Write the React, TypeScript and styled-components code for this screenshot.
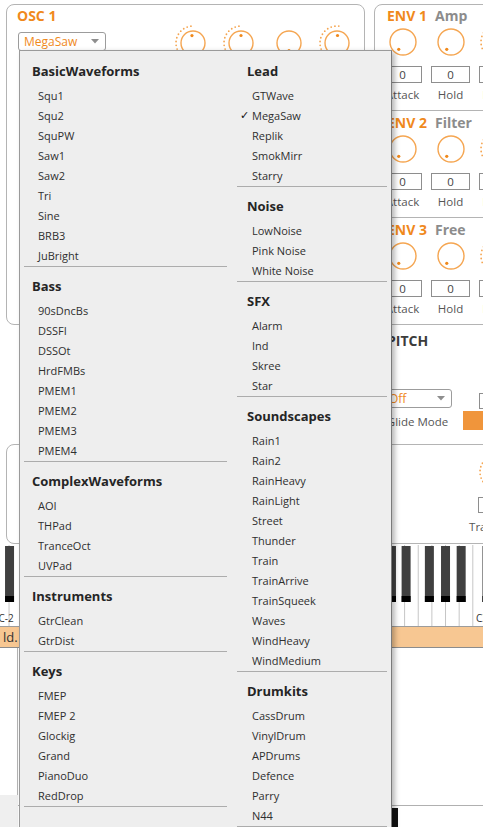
import React from "react";
import styled, { createGlobalStyle } from "styled-components";

const ORANGE = "#f0891c";
const KNOB = "#f5a652";

const GlobalStyle = createGlobalStyle`
  html, body { margin: 0; padding: 0; background: #fff; }
  body { font-family: "Open Sans", "Noto Sans", sans-serif; overflow: hidden; }
  * { box-sizing: border-box; }
`;

const Page = styled.div`
  position: relative;
  width: 483px;
  height: 827px;
  overflow: hidden;
  display: flex;
  flex-direction: column;
  background: #fff;
  color: #333;
`;

const TopArea = styled.div`
  flex: none;
  display: grid;
  grid-template-columns: 359px 170px;
  grid-template-rows: 321px 119px;
  column-gap: 9px;
  padding: 4px 0 0 6px;
`;

const OscPanel = styled.div`
  border: 1px solid #b4b4b4;
  border-radius: 8px;
  padding: 1px 3px 0 10px;
  display: flex;
  flex-direction: column;
`;

const PanelTitle = styled.div`
  height: 20px;
  line-height: 20px;
  font-size: 14px;
  font-weight: 700;
  color: ${ORANGE};
  white-space: nowrap;
`;

const OscRow = styled.div`
  display: flex;
  align-items: flex-start;
`;

const Select = styled.div<{ $w: number }>`
  width: ${(p) => p.$w}px;
  height: 19px;
  border: 1px solid #9c9c9c;
  border-radius: 3px;
  background: #fff;
  display: flex;
  align-items: center;
  justify-content: space-between;
  padding: 0 6px 0 5px;
  font-size: 12px;
  color: ${ORANGE};
  flex: none;
`;

const OscSelect = styled(Select)`
  margin: 6px 0 0 1px;
`;

const KnobGroup = styled.div`
  margin: -3px 0 0 auto;
  display: flex;
`;

const KnobCell = styled.div<{ $w: number }>`
  width: ${(p) => p.$w}px;
  display: flex;
  justify-content: center;
`;

const EnvPanel = styled.div`
  border: 1px solid #b4b4b4;
  border-radius: 8px;
  display: flex;
  flex-direction: column;
  overflow: hidden;
`;

const EnvSection = styled.div<{ $first?: boolean; $last?: boolean }>`
  padding: ${(p) => (p.$first ? 1 : 2)}px 0 7px 8px;
  border-bottom: ${(p) => (p.$last ? "none" : "1px solid #b4b4b4")};
`;

const SectionHead = styled.div`
  height: 20px;
  line-height: 20px;
  margin-left: 4px;
  display: flex;
  gap: 8px;
  font-size: 14px;
  font-weight: 700;
  white-space: nowrap;
`;

const HeadMain = styled.span<{ $color: string }>`
  color: ${(p) => p.$color};
`;

const HeadSub = styled.span`
  color: #8c8c8c;
`;

const CellRow = styled.div`
  display: flex;
  gap: 9px;
`;

const EnvCell = styled.div`
  width: 39px;
  flex: none;
  display: flex;
  flex-direction: column;
  align-items: center;
`;

const KnobWrap = styled.div<{ $mt: number }>`
  margin-top: ${(p) => p.$mt}px;
  height: 40px;
  display: flex;
  justify-content: center;
`;

const NumBox = styled.div<{ $mt: number; $h: number }>`
  margin-top: ${(p) => p.$mt}px;
  width: 39px;
  height: ${(p) => p.$h}px;
  border: 1px solid #8e8e8e;
  background: #fff;
  font-size: 11.5px;
  line-height: ${(p) => p.$h - 2}px;
  text-align: center;
  color: #444;
  flex: none;
`;

const CtlLabel = styled.div<{ $mt: number }>`
  margin-top: ${(p) => p.$mt}px;
  height: 16px;
  line-height: 16px;
  font-size: 11.5px;
  color: #555;
  white-space: nowrap;
`;

const PitchArea = styled.div`
  grid-column: 2;
  padding: 6px 0 0 9px;
`;

const PitchHead = styled.div`
  height: 20px;
  line-height: 20px;
  margin-left: 4px;
  font-size: 14px;
  font-weight: 700;
  color: #3c3c3c;
`;

const PitchRow = styled.div`
  margin-top: 38px;
  display: flex;
  gap: 11px;
`;

const WideCell = styled.div<{ $w: number }>`
  width: ${(p) => p.$w}px;
  flex: none;
  display: flex;
  flex-direction: column;
  align-items: center;
`;

const GlideButton = styled.div`
  margin-top: 2px;
  width: 70px;
  height: 19px;
  background: #f0953b;
  color: #fbe3c8;
  font-size: 11.5px;
  line-height: 19px;
  text-align: center;
`;

const LowerPanel = styled.div`
  flex: none;
  margin-left: 6px;
  width: 540px;
  height: 100px;
  border: 1px solid #b4b4b4;
  border-radius: 8px;
  display: flex;
  justify-content: flex-end;
  padding: 7px 13px 0 0;
`;

const KeyboardBox = styled.div`
  flex: none;
  margin-top: 1px;
  height: 81px;
  background: #fff;
`;

const StatusBar = styled.div`
  flex: none;
  height: 22px;
  border-top: 1px solid #9c9c9c;
  border-bottom: 1px solid #8c8c8c;
  background: #f7c792;
  font-size: 13px;
  line-height: 20px;
  padding-left: 3px;
  color: #333;
`;

const Footer = styled.div`
  flex: 1;
  display: flex;
`;

const LeftRail = styled.div`
  width: 18px;
  flex: none;
  display: flex;
  flex-direction: column;
`;

const RailTop = styled.div`
  height: 147px;
  border-right: 1px solid #b5b5b5;
  background: #fff;
`;

const RailBottom = styled.div`
  flex: 1;
  background: #efefef;
`;

const FooterMain = styled.div`
  flex: 1;
  display: flex;
  flex-direction: column;
  justify-content: flex-end;
`;

const BottomStrip = styled.div`
  height: 22px;
  border-top: 1px solid #b0b0b0;
  padding: 2px 0 0 374px;
  display: flex;
`;

const DarkBlock = styled.div`
  width: 6px;
  background: #111;
`;

/* ---------- Menu ---------- */

const Menu = styled.div`
  position: absolute;
  left: 19px;
  top: 50px;
  width: 373px;
  height: 800px;
  background: #eeeeee;
  border: 1px solid #9a9a9a;
  border-right-color: #7a7a7a;
  box-shadow: 3px 2px 5px rgba(0, 0, 0, 0.28);
  padding: 1px 0 0 4px;
  display: grid;
  grid-template-columns: 203px 150px;
  column-gap: 10px;
  align-items: start;
  z-index: 10;
`;

const Column = styled.div`
  display: flex;
  flex-direction: column;
`;

const Group = styled.div`
  padding-top: 9px;
  border-bottom: 1px solid #acacac;
`;

const GroupTitle = styled.div<{ $indent: number }>`
  height: 20px;
  line-height: 20px;
  margin-bottom: 5px;
  padding-left: ${(p) => p.$indent}px;
  font-size: 13px;
  font-weight: 700;
  color: #252525;
  white-space: nowrap;
`;

const Item = styled.div<{ $indent: number }>`
  position: relative;
  height: 20px;
  line-height: 20px;
  padding-left: ${(p) => p.$indent}px;
  font-size: 11px;
  color: #2f2f2f;
  white-space: nowrap;
`;

const Check = styled.span`
  position: absolute;
  left: 3px;
  top: 0;
  font-family: "DejaVu Sans", sans-serif;
  font-size: 11px;
  font-weight: 700;
  color: #111;
`;

/* ---------- drawings ---------- */

const Arrow = () => (
  <svg width="8" height="5" viewBox="0 0 8 5">
    <path d="M0 0 L8 0 L4 4.5 Z" fill="#8e8e8e" />
  </svg>
);

type KnobProps = { r?: number; value: number; arc?: boolean };

const Knob = ({ r = 12, value, arc }: KnobProps) => {
  const c = 20;
  const pt = (a: number, R: number) => {
    const rad = (a * Math.PI) / 180;
    return [c + R * Math.sin(rad), c - R * Math.cos(rad)];
  };
  const dots: React.ReactNode[] = [];
  if (arc) {
    for (let a = -150; a <= value + 2; a += 13) {
      const [x, y] = pt(a, r + 5);
      dots.push(<circle key={a} cx={x} cy={y} r={0.9} fill={KNOB} />);
    }
  }
  const [dx, dy] = pt(value, r - 4.5);
  return (
    <svg width="40" height="40" viewBox="0 0 40 40">
      <circle cx={c} cy={c} r={r} fill="none" stroke={KNOB} strokeWidth={1.4} />
      {dots}
      <circle cx={dx} cy={dy} r={1.6} fill={ORANGE} />
    </svg>
  );
};

const Keyboard = () => {
  const W = 13.64;
  const x0 = -4.6;
  const lines: React.ReactNode[] = [];
  for (let i = 0; i <= 36; i++) {
    const x = x0 + i * W;
    lines.push(<line key={"w" + i} x1={x} x2={x} y1={0} y2={81} stroke="#c6c6c6" strokeWidth={1} />);
  }
  const blacks: React.ReactNode[] = [];
  const pattern: [number, number][] = [
    [1, 0.5],
    [2, 1.5],
    [4, -2.5],
    [5, 0],
    [6, 2],
  ];
  for (let o = 0; o < 6; o++) {
    pattern.forEach(([idx, off]) => {
      const cx = x0 + (o * 7 + idx) * W + off;
      blacks.push(
        <g key={`b${o}-${idx}`}>
          <rect x={cx - 4.5} y={1} width={9} height={56} fill="#404040" />
          <rect x={cx - 4.5} y={51} width={9} height={6} fill="#000" />
        </g>
      );
    });
  }
  return (
    <svg width="483" height="81" viewBox="0 0 483 81">
      <rect x="0" y="0" width="483" height="81" fill="#fff" />
      {lines}
      {blacks}
      <text x={-1.6} y={77} fontSize="10" fill="#333" fontFamily="Open Sans, sans-serif">C-2</text>
      <text x={476} y={77} fontSize="10" fill="#333" fontFamily="Open Sans, sans-serif">C3</text>
    </svg>
  );
};

/* ---------- data ---------- */

type GroupData = { title: string; items: string[] };

const leftGroups: GroupData[] = [
  { title: "BasicWaveforms", items: ["Squ1", "Squ2", "SquPW", "Saw1", "Saw2", "Tri", "Sine", "BRB3", "JuBright"] },
  { title: "Bass", items: ["90sDncBs", "DSSFI", "DSSOt", "HrdFMBs", "PMEM1", "PMEM2", "PMEM3", "PMEM4"] },
  { title: "ComplexWaveforms", items: ["AOI", "THPad", "TranceOct", "UVPad"] },
  { title: "Instruments", items: ["GtrClean", "GtrDist"] },
  { title: "Keys", items: ["FMEP", "FMEP 2", "Glockig", "Grand", "PianoDuo", "RedDrop"] },
];

const rightGroups: GroupData[] = [
  { title: "Lead", items: ["GTWave", "MegaSaw", "Replik", "SmokMirr", "Starry"] },
  { title: "Noise", items: ["LowNoise", "Pink Noise", "White Noise"] },
  { title: "SFX", items: ["Alarm", "Ind", "Skree", "Star"] },
  {
    title: "Soundscapes",
    items: ["Rain1", "Rain2", "RainHeavy", "RainLight", "Street", "Thunder", "Train", "TrainArrive", "TrainSqueek", "Waves", "WindHeavy", "WindMedium"],
  },
  { title: "Drumkits", items: ["CassDrum", "VinylDrum", "APDrums", "Defence", "Parry", "N44"] },
];

const MenuColumn = ({ groups, head, item }: { groups: GroupData[]; head: number; item: number }) => (
  <Column>
    {groups.map((g) => (
      <Group key={g.title}>
        <GroupTitle $indent={head}>{g.title}</GroupTitle>
        {g.items.map((it) => (
          <Item key={it} $indent={item}>
            {it === "MegaSaw" && <Check>✓</Check>}
            {it}
          </Item>
        ))}
      </Group>
    ))}
  </Column>
);

const envs = [
  { n: "ENV 1", s: "Amp" },
  { n: "ENV 2", s: "Filter" },
  { n: "ENV 3", s: "Free" },
];

const EnvCells = () => (
  <CellRow>
    <EnvCell>
      <KnobWrap $mt={-4}>
        <Knob r={13} value={-150} />
      </KnobWrap>
      <NumBox $mt={4} $h={17}>0</NumBox>
      <CtlLabel $mt={4}>Attack</CtlLabel>
    </EnvCell>
    <EnvCell>
      <KnobWrap $mt={-4}>
        <Knob r={13} value={-150} />
      </KnobWrap>
      <NumBox $mt={4} $h={17}>0</NumBox>
      <CtlLabel $mt={4}>Hold</CtlLabel>
    </EnvCell>
    <EnvCell>
      <KnobWrap $mt={-4}>
        <Knob r={13} value={-20} arc />
      </KnobWrap>
      <NumBox $mt={4} $h={17}>0</NumBox>
      <CtlLabel $mt={4}>Decay</CtlLabel>
    </EnvCell>
  </CellRow>
);

export default function App() {
  return (
    <>
      <GlobalStyle />
      <Page>
        <TopArea>
          <OscPanel>
            <PanelTitle>OSC 1</PanelTitle>
            <OscRow>
              <OscSelect $w={88}>
                <span>MegaSaw</span>
                <Arrow />
              </OscSelect>
              <KnobGroup>
                <KnobCell $w={48}>
                  <Knob value={-8} arc />
                </KnobCell>
                <KnobCell $w={48}>
                  <Knob value={0} arc />
                </KnobCell>
                <KnobCell $w={48}>
                  <Knob value={180} />
                </KnobCell>
                <KnobCell $w={48}>
                  <Knob value={4} arc />
                </KnobCell>
              </KnobGroup>
            </OscRow>
          </OscPanel>

          <EnvPanel>
            {envs.map((e, i) => (
              <EnvSection key={e.n} $first={i === 0} $last={i === envs.length - 1}>
                <SectionHead>
                  <HeadMain $color={ORANGE}>{e.n}</HeadMain>
                  <HeadSub>{e.s}</HeadSub>
                </SectionHead>
                <EnvCells />
              </EnvSection>
            ))}
          </EnvPanel>

          <PitchArea>
            <PitchHead>PITCH</PitchHead>
            <PitchRow>
              <WideCell $w={69}>
                <Select $w={69}>
                  <span>Off</span>
                  <Arrow />
                </Select>
                <CtlLabel $mt={6}>Glide Mode</CtlLabel>
              </WideCell>
              <WideCell $w={70}>
                <NumBox $mt={4} $h={16}>0</NumBox>
                <GlideButton>Glide</GlideButton>
              </WideCell>
            </PitchRow>
          </PitchArea>
        </TopArea>

        <LowerPanel>
          <WideCell $w={70}>
            <KnobWrap $mt={0}>
              <Knob value={0} arc />
            </KnobWrap>
            <NumBox $mt={5} $h={16}>0</NumBox>
            <CtlLabel $mt={6}>Transpose</CtlLabel>
          </WideCell>
        </LowerPanel>

        <KeyboardBox>
          <Keyboard />
        </KeyboardBox>

        <StatusBar>ld.</StatusBar>

        <Footer>
          <LeftRail>
            <RailTop />
            <RailBottom />
          </LeftRail>
          <FooterMain>
            <BottomStrip>
              <DarkBlock />
            </BottomStrip>
          </FooterMain>
        </Footer>

        <Menu>
          <MenuColumn groups={leftGroups} head={8} item={14} />
          <MenuColumn groups={rightGroups} head={10} item={15} />
        </Menu>
      </Page>
    </>
  );
}
